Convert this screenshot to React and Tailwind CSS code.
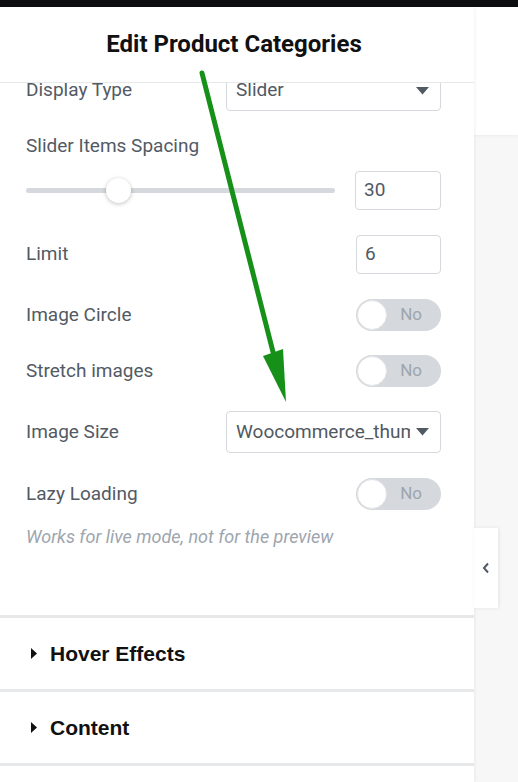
import React from 'react';

const label = 'text-[19px] text-[#525a64]';

function Caret() {
    return (
        <svg width="13" height="8" viewBox="0 0 13 8" className="shrink-0">
            <path d="M0 0 H13 L6.5 7.5 Z" fill="#515962" />
        </svg>
    );
}

function Toggle() {
    return (
        <div className="relative w-[85px] h-[32px] rounded-full bg-[#d5d8dc] flex items-center">
            <div className="absolute left-[1px] top-[1px] h-[30px] w-[30px] rounded-full bg-white border border-[#e2e4e7]" />
            <span className="ml-auto mr-[19px] text-[17px] text-[#9da5ae]">No</span>
        </div>
    );
}

function Row({ text, children, mt, h }) {
    return (
        <div className={`flex items-center justify-between ${mt} ${h}`}>
            <span className={label}>{text}</span>
            {children}
        </div>
    );
}

function Section({ title }) {
    return (
        <div className="h-[74px] flex items-center pl-[31px] border-b-[3px] border-[#e6e8ea]">
            <svg width="6" height="11" viewBox="0 0 6 11" className="mr-[13px]">
                <path d="M0 0 L6 5.5 L0 11 Z" fill="#111" />
            </svg>
            <span className="text-[21px] font-bold text-[#111] font-['Liberation_Sans',Arial,sans-serif]">{title}</span>
        </div>
    );
}

export default function App() {
    return (
        <div className="relative w-[518px] h-[782px] overflow-hidden bg-[#f7f7f7] font-['Roboto',sans-serif]">
            <div className="h-[7px] bg-[#0d0e10]" />
            <div className="flex h-[775px]">
                <div className="w-[474px] bg-white flex flex-col shadow-[1px_0_3px_rgba(0,0,0,0.06)] z-10">
                    <div className="h-[76px] shrink-0 flex items-center justify-center border-b border-[#e6e8ea] bg-white">
                        <h1 className="text-[24px] font-bold text-[#111] -mt-[1px] -ml-[6px]">Edit Product Categories</h1>
                    </div>
                    <div className="flex-1 overflow-hidden">
                        <div className="-mt-[13px] pl-[26px] pr-[33px] h-[545px]">
                            <Row text="Display Type" mt="" h="h-[41px]">
                                <div className="w-[215px] h-[41px] border border-[#d5d8dc] rounded-[4px] flex items-center justify-between pl-[9px] pr-[11px]">
                                    <span className="text-[19px] text-[#515962]">Slider</span>
                                    <Caret />
                                </div>
                            </Row>
                            <div className="mt-[24px] h-[22px] flex items-center">
                                <span className={label}>Slider Items Spacing</span>
                            </div>
                            <div className="mt-[14px] h-[39px] flex items-center justify-between">
                                <div className="relative w-[309px] h-[5px] rounded-full bg-[#d5d8dc]">
                                    <div className="absolute left-[80px] -top-[10px] h-[25px] w-[25px] rounded-full bg-white shadow-[0_1px_4px_rgba(0,0,0,0.25)]" />
                                </div>
                                <div className="w-[86px] h-[39px] border border-[#d5d8dc] rounded-[4px] flex items-center pl-[8px] text-[19px] text-[#515962]">30</div>
                            </div>
                            <Row text="Limit" mt="mt-[25px]" h="h-[39px]">
                                <div className="w-[85px] h-[39px] border border-[#d5d8dc] rounded-[4px] flex items-center pl-[8px] text-[19px] text-[#515962]">6</div>
                            </Row>
                            <Row text="Image Circle" mt="mt-[25px]" h="h-[32px]">
                                <Toggle />
                            </Row>
                            <Row text="Stretch images" mt="mt-[24px]" h="h-[32px]">
                                <Toggle />
                            </Row>
                            <Row text="Image Size" mt="mt-[24px]" h="h-[42px]">
                                <div className="w-[215px] h-[42px] border border-[#d5d8dc] rounded-[4px] flex items-center justify-between pl-[9px] pr-[11px] overflow-hidden">
                                    <span className="text-[19px] text-[#515962] whitespace-nowrap overflow-hidden w-[174px]">Woocommerce_thumbnail</span>
                                    <Caret />
                                </div>
                            </Row>
                            <Row text="Lazy Loading" mt="mt-[25px]" h="h-[32px]">
                                <Toggle />
                            </Row>
                            <p className="mt-[16px] text-[18px] italic text-[#9da5ae] leading-[22px]">Works for live mode, not for the preview</p>
                        </div>
                        <div className="border-b-[3px] border-[#e6e8ea]" />
                        <Section title="Hover Effects" />
                        <Section title="Content" />
                    </div>
                </div>
                <div className="flex-1 flex flex-col">
                    <div className="h-[128px] bg-white shadow-[0_1px_3px_rgba(0,0,0,0.05)]" />
                </div>
            </div>

            <div className="absolute left-[474px] top-[528px] w-[24px] h-[80px] bg-white shadow-[1px_0_4px_rgba(0,0,0,0.08)] flex items-center justify-center z-20">
                <svg width="8" height="12" viewBox="0 0 8 12">
                    <path d="M6 1.5 L2 6 L6 10.5" stroke="#515962" strokeWidth="2" fill="none" />
                </svg>
            </div>

            <svg className="absolute inset-0 z-30 pointer-events-none" width="518" height="782" viewBox="0 0 518 782">
                <line x1="202" y1="73" x2="273" y2="352" stroke="#17901a" strokeWidth="5" strokeLinecap="round" />
                <path d="M263 356 L283 349 L286 402 Z" fill="#17901a" />
            </svg>
        </div>
    );
}
